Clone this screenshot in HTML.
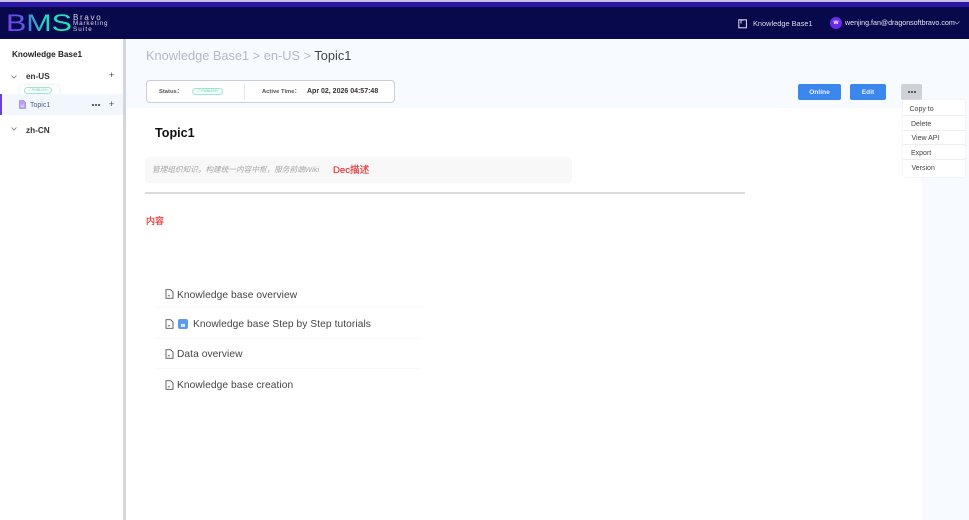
<!DOCTYPE html>
<html lang="en">
<head>
<meta charset="utf-8">
<title>Knowledge Base</title>
<style>
html,body{margin:0;padding:0;width:969px;height:520px;overflow:hidden;background:#fff;}
body{position:relative;font-family:"Liberation Sans","Noto Sans CJK SC",sans-serif;color:#222;filter:blur(.35px);}
div,span{position:absolute;white-space:nowrap;box-sizing:border-box;}
svg{position:absolute;overflow:visible;}
.b{font-weight:700;}
.menu{left:903px;width:62px;height:15px;font-size:7px;line-height:17px;color:#444;border-bottom:1px solid #eee;}
.li{font-size:10.2px;color:#444;letter-spacing:.08px;line-height:14px;}
.sep{left:156px;width:266px;height:1px;background:#f8f8f8;}
.dots i{position:absolute;top:0;width:2px;height:2px;border-radius:50%;background:#333;}
</style>
</head>
<body>
<div style="left:0;top:0;width:969px;height:2px;background:#c9bfe0"></div>
<div style="left:0;top:2px;width:969px;height:5px;background:#2a18a4"></div>
<div style="left:0;top:7px;width:969px;height:32px;background:#07094c"></div>

<svg style="left:0;top:0" width="120" height="40">
<defs>
<linearGradient id="g" gradientUnits="userSpaceOnUse" x1="6" y1="31" x2="72" y2="14">
<stop offset="0" stop-color="#7a3cf0"/><stop offset=".28" stop-color="#5a5ce8"/><stop offset=".55" stop-color="#20d8c0"/><stop offset="1" stop-color="#1fe8b8"/>
</linearGradient>
</defs>
<text x="6" y="31" font-family="Liberation Sans" font-size="24" fill="url(#g)" textLength="66" lengthAdjust="spacingAndGlyphs">BMS</text>
</svg>
<div style="left:73px;top:13.5px;font-size:8px;line-height:8px;color:#d8d8e8;letter-spacing:1.7px">Bravo</div>
<div style="left:73px;top:20.5px;font-size:6.3px;line-height:6px;color:#d8d8e8;letter-spacing:.85px">Marketing</div>
<div style="left:73px;top:26.5px;font-size:6.3px;line-height:6px;color:#d8d8e8;letter-spacing:1.1px">Suite</div>

<svg style="left:738px;top:19px" width="10" height="10" viewBox="0 0 10 10" fill="none" stroke="#e4e4ee" stroke-width="1"><rect x=".8" y=".8" width="7.6" height="8"/><path d="M3 1v3.5M3 1h3"/></svg>
<div style="left:753px;top:18px;font-size:7.4px;line-height:12px;color:#dcdcea">Knowledge Base1</div>
<div style="left:830px;top:17px;width:12px;height:12px;border-radius:50%;background:#6a2bea;color:#fff;font-size:6.5px;line-height:12px;text-align:center;font-weight:700">w</div>
<div style="left:845px;top:17.5px;font-size:7.1px;line-height:11px;color:#e4e4f0">wenjing.fan@dragonsoftbravo.com</div>
<svg style="left:954px;top:21px" width="6" height="4" viewBox="0 0 6 4" fill="none" stroke="#aaaacc" stroke-width=".7"><path d="M.5.5 3 3 5.5.5"/></svg>

<div style="left:126px;top:39px;width:843px;height:69px;background:#f7fbff"></div>
<div style="left:922px;top:108px;width:47px;height:412px;background:#f7fbff"></div>

<div style="left:123px;top:39px;width:3px;height:481px;background:#d3d6df"></div>

<div class="b" style="left:12px;top:49px;font-size:8.2px;line-height:12px;color:#222">Knowledge Base1</div>
<svg style="left:11px;top:75px" width="6" height="4" viewBox="0 0 6 4" fill="none" stroke="#777" stroke-width=".8"><path d="M.5.5 3 3 5.5.5"/></svg>
<div class="b" style="left:26px;top:71px;font-size:8.2px;line-height:12px;color:#333">en-US</div>
<div style="left:109px;top:70px;font-size:9px;line-height:11px;color:#444">+</div>

<div style="left:20px;top:85px;width:39px;height:11px;background:#fff;border-radius:3px;box-shadow:0 0 3px #e4e4e4"></div>
<div style="left:24px;top:86.5px;width:28px;height:7px;border:1px solid #9fe6cf;border-radius:4px;font-size:3.6px;line-height:5px;color:#5cc9a7;text-align:center">✓ PUBLISH</div>

<div style="left:0;top:94px;width:123px;height:21px;background:#f1f7fd"></div>
<div style="left:0;top:94px;width:2px;height:21px;background:#6b3fdc"></div>
<svg style="left:19px;top:100px" width="7" height="9" viewBox="0 0 7 9"><path d="M.5.5H4.5L6.5 2.5V8.5H.5Z" fill="#b9a2ee" stroke="#8d6ce0" stroke-width=".6"/><path d="M1.8 5h3.4M1.8 6.6h3.4" stroke="#fff" stroke-width=".6"/></svg>
<div style="left:30px;top:100px;font-size:7px;line-height:12px;color:#5a6080">Topic1</div>
<div class="dots" style="left:92px;top:104px;width:8px;height:2px"><i style="left:0"></i><i style="left:3px"></i><i style="left:6px"></i></div>
<div style="left:109px;top:99px;font-size:9px;line-height:11px;color:#444">+</div>

<svg style="left:11px;top:127px" width="6" height="4" viewBox="0 0 6 4" fill="none" stroke="#777" stroke-width=".8"><path d="M.5.5 3 3 5.5.5"/></svg>
<div class="b" style="left:26px;top:125px;font-size:8.2px;line-height:12px;color:#333">zh-CN</div>

<div style="left:146px;top:47px;font-size:12.8px;line-height:18px;color:#b4b9c7">Knowledge Base1 &gt; en-US &gt; <span style="position:static;color:#444">Topic1</span></div>

<div style="left:146px;top:80px;width:249px;height:23px;background:#fff;border:1px solid #c8cedb;border-radius:4px"></div>
<div class="b" style="left:159px;top:87px;font-size:5.8px;line-height:11px;color:#555">Status：</div>
<div style="left:192px;top:88px;width:31px;height:7px;background:#f3fffb;border:1px solid #9fe6cf;border-radius:4px;font-size:3.8px;line-height:5px;color:#5cc9a7;text-align:center">✓ PUBLISH</div>
<div style="left:244px;top:83px;width:1px;height:17px;background:#e6e8ee"></div>
<div class="b" style="left:262px;top:87px;font-size:5.8px;line-height:11px;color:#555">Active Time：</div>
<div class="b" style="left:307px;top:86px;font-size:7px;line-height:11px;color:#333">Apr 02, 2026 04:57:48</div>

<div class="b" style="left:798px;top:84px;width:43px;height:16px;background:#3b87ee;border-radius:2px;color:#e8f2ff;font-size:6.6px;line-height:16px;text-align:center;padding-top:1px">Online</div>
<div class="b" style="left:850px;top:84px;width:36px;height:16px;background:#3b87ee;border-radius:2px;color:#e8f2ff;font-size:6.6px;line-height:16px;text-align:center;padding-top:1px">Edit</div>
<div style="left:901px;top:84px;width:21px;height:16px;background:#cfd1d8;border-radius:2px"></div>
<div class="dots" style="left:907.5px;top:91px;width:8px;height:2px"><i style="left:0"></i><i style="left:3px"></i><i style="left:6px"></i></div>

<div style="left:903px;top:100px;width:62px;height:77px;background:#fff;box-shadow:0 0 2px #e6e6e6"></div>
<div class="menu" style="top:101px;padding-left:6.5px">Copy to</div>
<div class="menu" style="top:116px;padding-left:8px">Delete</div>
<div class="menu" style="top:130px;padding-left:8.5px">View API</div>
<div class="menu" style="top:145px;padding-left:8px">Export</div>
<div class="menu" style="top:160px;padding-left:8.5px;border:0">Version</div>

<div class="b" style="left:155px;top:125px;font-size:12.6px;line-height:16px;color:#111">Topic1</div>

<div style="left:145px;top:157px;width:427px;height:26px;background:#f8f8f8;border-radius:4px"></div>
<div style="left:152px;top:164px;font-size:7.65px;line-height:12px;color:#a8a8a8;font-style:italic">管理组织知识，构建统一内容中枢，服务前端Wiki</div>
<div style="left:333px;top:164px;font-size:9.6px;line-height:13px;color:#e23b3b;-webkit-text-stroke:.2px #e23b3b">Dec描述</div>
<div style="left:145px;top:192px;width:600px;height:2px;background:#dcdcdc"></div>
<div style="left:146px;top:215px;font-size:9px;line-height:13px;color:#e23b3b;-webkit-text-stroke:.2px #e23b3b">内容</div>

<svg style="left:165px;top:289px" width="9" height="10" viewBox="0 0 9 10" fill="none" stroke="#555" stroke-width=".9"><path d="M1 .7H5.6L8 3.1V9.3H1Z"/><path d="M2.8 6.8H5"/></svg>
<div class="li" style="left:177px;top:288.5px">Knowledge base overview</div>
<div class="sep" style="top:307px"></div>

<svg style="left:165px;top:319px" width="9" height="10" viewBox="0 0 9 10" fill="none" stroke="#555" stroke-width=".9"><path d="M1 .7H5.6L8 3.1V9.3H1Z"/><path d="M2.8 6.8H5"/></svg>
<div style="left:178px;top:319px;width:10px;height:10px;border-radius:2px;background:#5b9cec"></div>
<div style="left:181px;top:324px;width:4px;height:3px;background:#dbe9fb"></div>
<div class="li" style="left:193px;top:318px">Knowledge base Step by Step tutorials</div>
<div class="sep" style="top:338px"></div>

<svg style="left:165px;top:349px" width="9" height="10" viewBox="0 0 9 10" fill="none" stroke="#555" stroke-width=".9"><path d="M1 .7H5.6L8 3.1V9.3H1Z"/><path d="M2.8 6.8H5"/></svg>
<div class="li" style="left:177px;top:348px">Data overview</div>
<div class="sep" style="top:368px"></div>

<svg style="left:165px;top:380px" width="9" height="10" viewBox="0 0 9 10" fill="none" stroke="#555" stroke-width=".9"><path d="M1 .7H5.6L8 3.1V9.3H1Z"/><path d="M2.8 6.8H5"/></svg>
<div class="li" style="left:177px;top:379px">Knowledge base creation</div>
</body>
</html>
